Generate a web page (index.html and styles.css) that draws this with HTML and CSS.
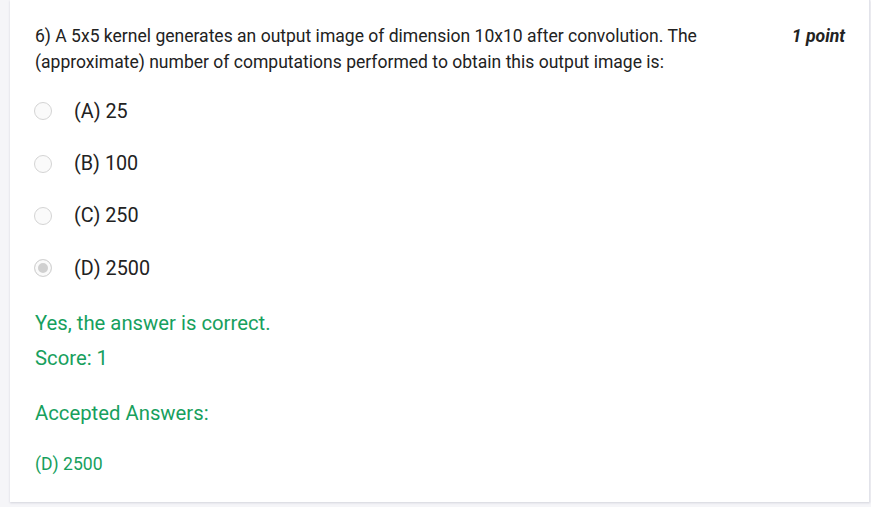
FILE: index.html
```html
<!DOCTYPE html>
<html>
<head>
<meta charset="utf-8">
<link rel="stylesheet" href="styles.css">
</head>
<body>
<div class="card">
  <div class="qhead">
    <div class="qtext">6) A 5x5 kernel generates an output image of dimension 10x10 after convolution. The (approximate) number of computations performed to obtain this output image is:</div>
    <div class="points">1 point</div>
  </div>
  <div class="options">
    <div class="opt"><span class="radio"></span><span>(A) 25</span></div>
    <div class="opt"><span class="radio"></span><span>(B) 100</span></div>
    <div class="opt"><span class="radio"></span><span>(C) 250</span></div>
    <div class="opt"><span class="radio checked"></span><span>(D) 2500</span></div>
  </div>
  <div class="feedback">
    <div class="correct">Yes, the answer is correct.</div>
    <div class="score">Score: 1</div>
    <div class="accepted">Accepted Answers:</div>
    <div class="answer">(D) 2500</div>
  </div>
</div>
</body>
</html>
```
FILE: styles.css
```css
html, body {
  margin: 0;
  padding: 0;
  background: #f5f5f8;
  font-family: Roboto, "Noto Sans", sans-serif;
  color: #222;
}
body {
  padding: 0 0 5px 10px;
  height: 507px;
  box-sizing: border-box;
  display: flex;
  align-items: flex-end;
}
.card {
  width: 860px;
  height: 502px;
  box-sizing: border-box;
  background: #fff;
  border-right: 1px solid #e2e3ea;
  box-shadow: 0 1px 2px rgba(60, 64, 100, 0.18);
  padding: 23px 24px 0 25px;
}
.qhead {
  display: flex;
  justify-content: space-between;
  align-items: flex-start;
}
.qtext {
  width: 700px;
  font-size: 17.55px;
  line-height: 26px;
}
.points {
  font-weight: bold;
  font-style: italic;
  font-size: 17.6px;
  line-height: 26px;
}
.options {
  margin-top: 10px;
  display: flex;
  flex-direction: column;
}
.opt {
  display: flex;
  align-items: center;
  height: 52.4px;
  font-size: 19.8px;
}
.radio {
  width: 16px;
  height: 16px;
  border: 1px solid #d4d4d4;
  border-radius: 50%;
  background: #fafafa;
  margin-left: -1px;
  margin-right: 22px;
  flex: none;
  box-sizing: content-box;
}
.radio.checked {
  background: #d0d0d0;
  box-shadow: inset 0 0 0 3px #fafafa;
}
.feedback {
  color: #17a05d;
  margin-top: 16px;
}
.correct {
  font-size: 20.3px;
  line-height: 24px;
}
.score {
  font-size: 20.3px;
  line-height: 24px;
  margin-top: 11px;
}
.accepted {
  font-size: 20.3px;
  line-height: 24px;
  margin-top: 31px;
}
.answer {
  font-size: 17.6px;
  line-height: 22px;
  margin-top: 28px;
}
```
